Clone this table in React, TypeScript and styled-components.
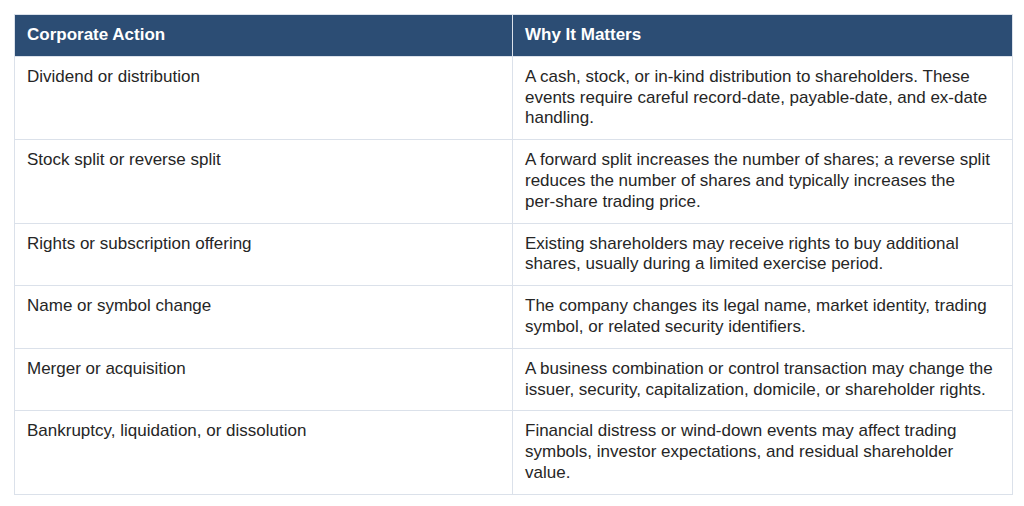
import React from "react";
import styled, { createGlobalStyle } from "styled-components";

const Global = createGlobalStyle`
  html, body { margin: 0; padding: 0; background: #ffffff; }
  body { font-family: "Liberation Sans", Arial, Helvetica, sans-serif; }
`;

const Page = styled.div`
  padding: 14px 12px 12px 14px;
  width: 1024px;
  box-sizing: border-box;
`;

const Table = styled.table`
  width: 998px;
  border-collapse: collapse;
  table-layout: fixed;
  font-size: 17px;
  line-height: 20.8px;
  color: #262626;
`;

const HeadCell = styled.th`
  background: #2c4d74;
  color: #ffffff;
  font-weight: 700;
  text-align: left;
  padding: 10px 12px 10px 12px;
  border: 1px solid #dbe1ea;
  vertical-align: top;
`;

const Cell = styled.td`
  padding: 10px 12px 10px 12px;
  border: 1px solid #dbe1ea;
  vertical-align: top;
`;

const NoWrap = styled.span`
  white-space: nowrap;
`;

const rows: [string, React.ReactNode][] = [
  [
    "Dividend or distribution",
    "A cash, stock, or in-kind distribution to shareholders. These events require careful record-date, payable-date, and ex-date handling.",
  ],
  [
    "Stock split or reverse split",
    <>
      A forward split increases the number of shares; a reverse split reduces the number of shares and typically increases the{" "}
      <NoWrap>per-share</NoWrap> trading price.
    </>,
  ],
  [
    "Rights or subscription offering",
    "Existing shareholders may receive rights to buy additional shares, usually during a limited exercise period.",
  ],
  [
    "Name or symbol change",
    "The company changes its legal name, market identity, trading symbol, or related security identifiers.",
  ],
  [
    "Merger or acquisition",
    "A business combination or control transaction may change the issuer, security, capitalization, domicile, or shareholder rights.",
  ],
  [
    "Bankruptcy, liquidation, or dissolution",
    "Financial distress or wind-down events may affect trading symbols, investor expectations, and residual shareholder value.",
  ],
];

export default function App() {
  return (
    <>
      <Global />
      <Page>
        <Table>
          <colgroup>
            <col style={{ width: "498px" }} />
            <col style={{ width: "500px" }} />
          </colgroup>
          <thead>
            <tr>
              <HeadCell>Corporate Action</HeadCell>
              <HeadCell>Why It Matters</HeadCell>
            </tr>
          </thead>
          <tbody>
            {rows.map(([a, b]) => (
              <tr key={a}>
                <Cell>{a}</Cell>
                <Cell>{b}</Cell>
              </tr>
            ))}
          </tbody>
        </Table>
      </Page>
    </>
  );
}
